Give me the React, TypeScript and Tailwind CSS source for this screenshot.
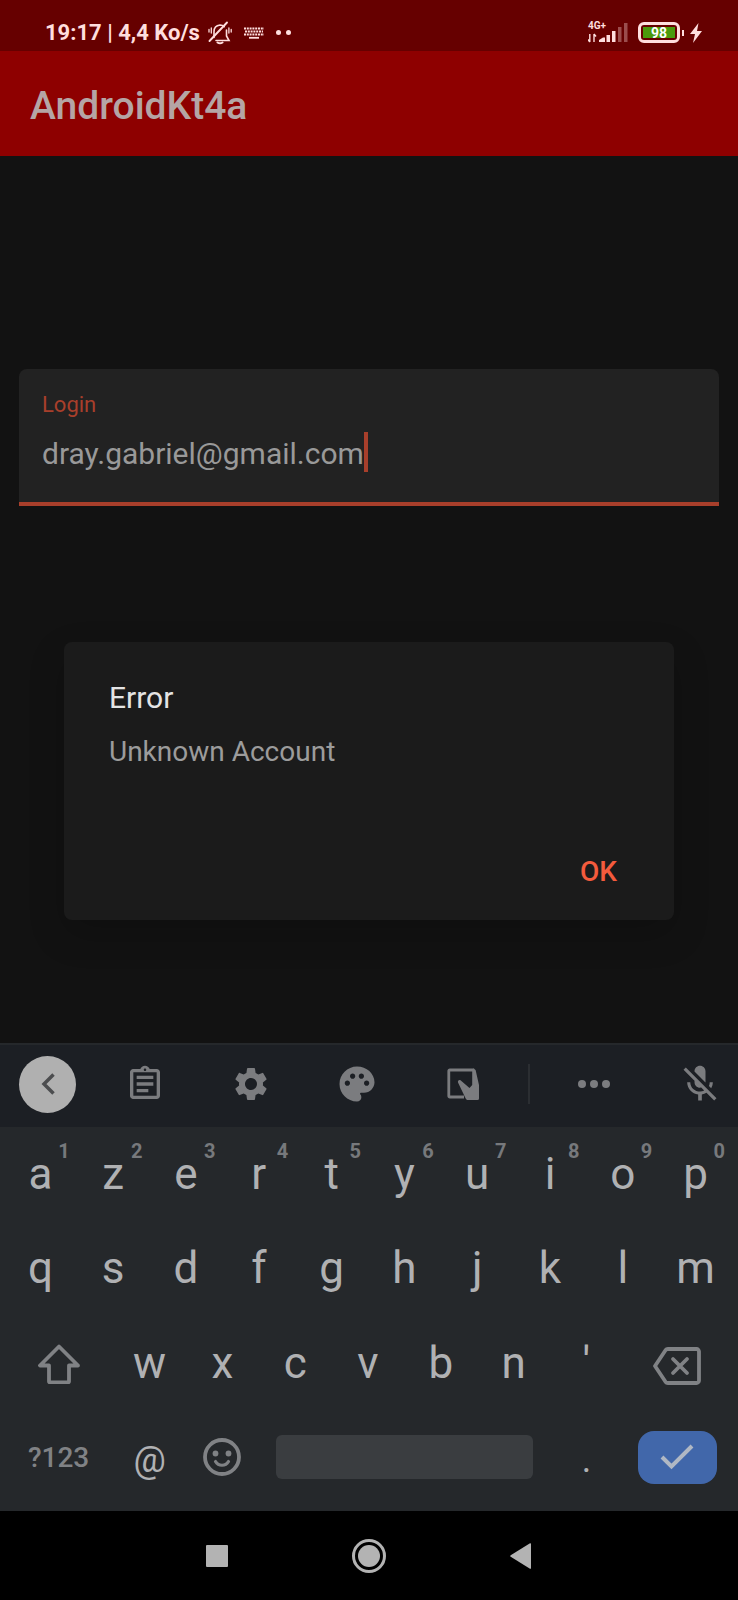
import type { ReactNode } from "react";
import { MdMicOff, MdOutlineAssignment, MdPalette, MdSettings } from "react-icons/md";

const topRow = ["a", "z", "e", "r", "t", "y", "u", "i", "o", "p"];
const homeRow = ["q", "s", "d", "f", "g", "h", "j", "k", "l", "m"];
const bottomRow = ["w", "x", "c", "v", "b", "n", "'"];

function MutedBellIcon() {
  return (
    <svg viewBox="0 0 24 24" className="h-6 w-6" fill="none" stroke="currentColor" strokeWidth="1.6" strokeLinecap="round" aria-hidden="true">
      <path d="M6 16.5V10.500C6 7 8.500 4.500 12 4c1.700 0 3.200.6 4.300 1.700M18.500 9v6l2.500 4.500H8" />
      <path d="M1.500 20 19 1.500" strokeWidth="1.900" />
      <path d="M3.300 7v5M1 8.500v2.500M20.900 7v5M23.200 8.500v2.500" strokeWidth="1.300" />
      <path d="M9.500 21.500c1.500 1 3.500 1 5 0" strokeWidth="2" />
    </svg>
  );
}

function KeyboardIcon() {
  return (
    <svg viewBox="0 0 20 12" className="h-3 w-5" fill="none" stroke="currentColor" aria-hidden="true">
      <path d="M0 1.500h20M1 4.500h18M0 7.500h20" strokeWidth="2" strokeDasharray="2 .8" />
      <path d="M5 10.800h10" strokeWidth="1.800" />
    </svg>
  );
}

function SignalIcon() {
  return (
    <svg viewBox="0 0 40 21" className="h-[21px] w-10" fill="currentColor" aria-hidden="true">
      <path d="M1.800 12v8M0 17.500 1.800 20M6 20v-8M6 12l2 2.500" stroke="currentColor" strokeWidth="1.400" fill="none" />
      <path d="M11 20v-2l4-2.500h2V20zM18.500 13h3.500v7h-3.500zM24 9h3.500v11H24z" />
      <path d="M30 5h3.500v15H30zM36 1h3.500v19H36z" opacity=".35" />
    </svg>
  );
}

function BoltIcon() {
  return (
    <svg viewBox="0 0 12 20" className="h-5 w-3" fill="currentColor" aria-hidden="true">
      <path d="M8.500 0 0 11h5L3 20 12 8H7z" />
    </svg>
  );
}

function OneHandedIcon() {
  return (
    <svg viewBox="0 0 32 32" className="h-8 w-8" fill="currentColor" aria-hidden="true">
      <path d="M17 29H2.800a1 1 0 0 1-1-1V3a1 1 0 0 1 1-1h24.400" fill="none" stroke="currentColor" strokeWidth="2.800" />
      <path d="M26.500.6 28.600 2 32 17v13.500a1.500 1.500 0 0 1-1.500 1.500H21c-1 0-1.700-.5-2.200-1.300L11 14.500c-.4-1.700.9-3 2.500-2.200L22.500 20 25.200 17V3z" />
    </svg>
  );
}

function ShiftIcon() {
  return (
    <svg viewBox="0 0 42 40" className="h-10 w-[42px]" fill="none" stroke="currentColor" strokeWidth="3.800" strokeLinejoin="round" aria-hidden="true">
      <path d="M21 2.500 2 21.500h9V37.500a.8.8 0 0 0 .8.800h18.400a.8.800 0 0 0 .8-.8V21.500h9z" />
    </svg>
  );
}

function BackspaceIcon() {
  return (
    <svg viewBox="0 0 48 38" className="h-[38px] w-12" fill="none" stroke="currentColor" strokeWidth="3.800" strokeLinejoin="round" aria-hidden="true">
      <path d="M15 2h28.500a2.500 2.500 0 0 1 2.500 2.500v29a2.500 2.500 0 0 1-2.500 2.500H15a3 3 0 0 1-2.500-1.200L2 19 12.500 3.200A3 3 0 0 1 15 2z" />
      <path d="m20 12 14 14m0-14-14 14" strokeLinecap="round" />
    </svg>
  );
}

function SmileyIcon() {
  return (
    <svg viewBox="0 0 38 38" className="h-[38px] w-[38px]" aria-hidden="true">
      <circle cx="19" cy="19" r="17" fill="none" stroke="currentColor" strokeWidth="3.800" />
      <circle cx="12.500" cy="15.500" r="2.900" fill="currentColor" />
      <circle cx="25.500" cy="15.500" r="2.900" fill="currentColor" />
      <path d="M12.500 23.500c3 5 10 5 13 0" fill="none" stroke="currentColor" strokeWidth="3.200" strokeLinecap="round" />
    </svg>
  );
}

function StatusBar() {
  return (
    <div className="flex h-[51px] items-center justify-between bg-[#660000] pt-3.5 pr-9 pl-[45px] text-[#ffdede]">
      <div className="flex items-center">
        <span className="text-[22px] leading-7 font-bold whitespace-nowrap">19:17 | 4,4 Ko/s</span>
        <span className="ml-2 flex items-center gap-3">
          <MutedBellIcon />
          <KeyboardIcon />
          <span className="flex gap-[5px]">
            <span className="h-[5px] w-[5px] rounded-full bg-current" />
            <span className="h-[5px] w-[5px] rounded-full bg-current" />
          </span>
        </span>
      </div>
      <div className="flex items-center">
        <div className="relative mr-2.5">
          <SignalIcon />
          <span className="absolute -top-px left-0 text-[10px] leading-none font-bold">4G+</span>
        </div>
        <div className="flex h-[21px] w-[42px] items-center rounded-md border-[3px] border-[#ffdede] p-0.5">
          <span className="flex h-full w-full items-center justify-center bg-[#4a9a0c] text-[14px] leading-none font-bold text-white">98</span>
        </div>
        <span className="mr-1.5 ml-0.5 h-1.5 w-0.5 bg-[#ffdede]" />
        <BoltIcon />
      </div>
    </div>
  );
}

function ToolButton({ label, children, className = "justify-center" }: { label: string; children: ReactNode; className?: string }) {
  return (
    <button type="button" aria-label={label} className={`flex h-full items-center ${className}`}>
      {children}
    </button>
  );
}

function KeyboardToolbar() {
  return (
    <div className="grid h-[84px] grid-cols-[92fr_106fr_106fr_106fr_106fr_25fr_106fr_91fr] items-center border-t-2 border-[#25282b] bg-[#1c1f24] pb-1 text-[#7b7c7f]">
      <ToolButton label="Back" className="justify-start pl-[19px]">
        <span className="flex h-[57px] w-[57px] items-center justify-center rounded-full bg-[#b0b0b0] text-[#4c4d4f]">
          <svg viewBox="0 0 14 22" className="h-[22px] w-3.5" fill="none" stroke="currentColor" strokeWidth="3.500" aria-hidden="true">
            <path d="M12.500 1.500 3 11l9.500 9.500" />
          </svg>
        </span>
      </ToolButton>
      <ToolButton label="Clipboard"><MdOutlineAssignment size={40} /></ToolButton>
      <ToolButton label="Settings"><MdSettings size={40} /></ToolButton>
      <ToolButton label="Theme"><MdPalette size={42} /></ToolButton>
      <ToolButton label="One-handed mode"><OneHandedIcon /></ToolButton>
      <span className="h-10 w-0.5 justify-self-center bg-[#2b2e32]" />
      <ToolButton label="More">
        <svg viewBox="0 0 32 8" className="h-2 w-8" fill="currentColor" aria-hidden="true">
          <circle cx="4" cy="4" r="4" />
          <circle cx="16" cy="4" r="4" />
          <circle cx="28" cy="4" r="4" />
        </svg>
      </ToolButton>
      <ToolButton label="Voice input off" className="justify-end pr-4"><MdMicOff size={44} /></ToolButton>
    </div>
  );
}

function Keyboard() {
  return (
    <section aria-label="Keyboard" className="bg-[#25282b] text-[#b0b1b3]">
      <KeyboardToolbar />
      <div className="pr-1.5 pb-1.5 pl-1 text-[44px] leading-none">
        <div className="grid h-[94px] grid-cols-10">
          {topRow.map((key, index) => (
            <button type="button" key={key} className="relative flex items-center justify-center">
              {key}
              <span className="absolute top-3 right-[7px] text-[20px] leading-6 font-bold text-[#77797c]">{(index + 1) % 10}</span>
            </button>
          ))}
        </div>
        <div className="grid h-[94px] grid-cols-10">
          {homeRow.map((key) => (
            <button type="button" key={key} className="flex items-center justify-center">{key}</button>
          ))}
        </div>
        <div className="grid h-[94px] grid-cols-20">
          <button type="button" aria-label="Shift" className="col-span-3 flex items-center justify-center pt-1 text-[#808285]"><ShiftIcon /></button>
          {bottomRow.map((key) => (
            <button type="button" key={key} className="col-span-2 flex items-center justify-center pt-0.5">{key}</button>
          ))}
          <button type="button" aria-label="Backspace" className="col-span-3 flex items-center justify-center pt-2 text-[#808285]"><BackspaceIcon /></button>
        </div>
        <div className="grid h-24 grid-cols-20 items-center">
          <button type="button" className="col-span-3 pt-0.5 text-[28px] leading-none font-medium text-[#808285]">?123</button>
          <button type="button" className="col-span-2 pt-1.5 text-[36px] leading-none">@</button>
          <button type="button" aria-label="Emoji" className="col-span-2 flex justify-center text-[#808285]"><SmileyIcon /></button>
          <button type="button" aria-label="Space" className="col-span-8 mx-[17px] h-11 rounded-md bg-[#3a3d40]" />
          <button type="button" className="col-span-2 pt-1.5 text-[36px] leading-none">.</button>
          <button type="button" aria-label="Done" className="col-span-3 mx-[15px] flex h-[53px] items-center justify-center rounded-2xl bg-[#4167aa] text-[#b0b8c4]">
            <svg viewBox="0 0 34 26" className="h-[26px] w-[34px]" fill="none" stroke="currentColor" strokeWidth="4" aria-hidden="true">
              <path d="m2 13 9.500 9.500L32 2" />
            </svg>
          </button>
        </div>
      </div>
    </section>
  );
}

function NavigationBar() {
  return (
    <nav aria-label="System" className="flex h-[89px] items-center justify-center gap-[119px] bg-black text-[#b3b3b3]">
      <button type="button" aria-label="Recent apps" className="flex w-8 justify-center">
        <span className="h-[22px] w-[22px] rounded-[1px] bg-current" />
      </button>
      <button type="button" aria-label="Home" className="flex h-[34px] w-[34px] items-center justify-center rounded-full border-[3px] border-[#b3b3b3]">
        <span className="h-[22px] w-[22px] rounded-full bg-current" />
      </button>
      <button type="button" aria-label="Back" className="flex w-8 justify-center">
        <svg viewBox="0 0 22 26" className="h-[26px] w-[22px]" fill="currentColor" aria-hidden="true">
          <path d="M21 .800v24.400a.7.7 0 0 1-1 .5L.7 13.800a1 1 0 0 1 0-1.600L20 .3a.7.7 0 0 1 1 .5z" />
        </svg>
      </button>
    </nav>
  );
}

export default function App() {
  return (
    <div className="flex min-h-screen flex-col bg-[#121212] font-[Roboto,sans-serif]">
      <StatusBar />
      <header className="flex h-[105px] items-center bg-[#8e0000] px-[30px] pt-1.5">
        <h1 className="text-[39px] leading-none font-medium text-[#b5a5a5]">AndroidKt4a</h1>
      </header>
      <main className="flex-1 px-[19px] pt-[213px] pb-20">
        <div className="h-[137px] rounded-t-lg border-b-4 border-[#a83f2b] bg-[#222222] px-[23px] pt-[22px]">
          <label htmlFor="login" className="block text-[22px] leading-7 text-[#a83f2b]">Login</label>
          <div className="mt-[13px] flex h-10 items-center">
            <input
              id="login"
              type="email"
              defaultValue="dray.gabriel@gmail.com"
              className="field-sizing-content bg-transparent pt-1 text-[30px] leading-9 text-[#999999] caret-transparent outline-none"
            />
            <span className="h-10 w-1 bg-[#a83f2b]" />
          </div>
        </div>
        <div
          role="alertdialog"
          aria-labelledby="dialog-title"
          aria-describedby="dialog-message"
          className="mx-[45px] mt-[136px] flex h-[278px] flex-col rounded-lg bg-[#1b1b1b] px-[45px] pt-9 pb-6 shadow-[0_14px_36px_rgba(0,0,0,0.18)]"
        >
          <h2 id="dialog-title" className="text-[30px] leading-10 text-[#e4e4e4]">Error</h2>
          <p id="dialog-message" className="mt-4 text-[28px] leading-9 text-[#9c9c9c]">Unknown Account</p>
          <button type="button" className="mt-auto h-12 self-end px-3 text-[28px] leading-none font-medium text-[#f45b3d]">OK</button>
        </div>
      </main>
      <Keyboard />
      <NavigationBar />
    </div>
  );
}
